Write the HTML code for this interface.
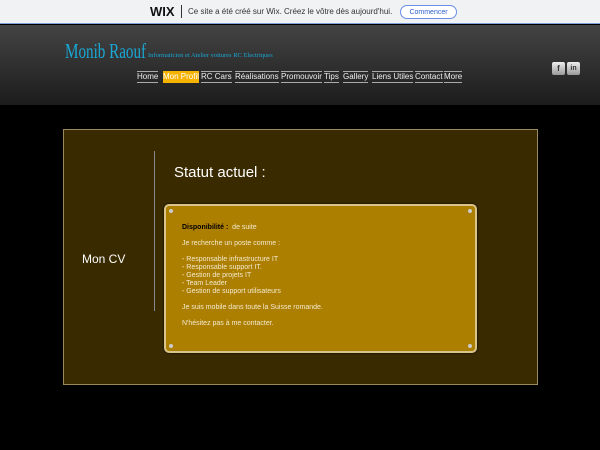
<!DOCTYPE html>
<html><head><meta charset="utf-8"><style>
*{margin:0;padding:0;box-sizing:border-box}
body{width:600px;height:450px;background:#000;font-family:"Liberation Sans",sans-serif;position:relative;overflow:hidden}
.wix{position:absolute;left:0;top:0;width:600px;height:24px;background:#f1f2f4;border-bottom:1px solid #7f9fdc}
.hdr{position:absolute;left:0;top:25px;width:600px;height:80px;background:linear-gradient(#444,#1c1c1c)}
.nav a{position:absolute;top:71px;height:12px;font-size:8px;color:#eee;border-top:1px solid #aaa;border-bottom:1px solid #aaa;line-height:10px;white-space:nowrap}
.box{position:absolute;left:63px;top:129px;width:475px;height:256px;background:#3a2a00;border:1px solid #9a8a60}
.card{position:absolute;left:164px;top:204px;width:313px;height:149px;background:#ad7f00;border:2px solid #d9c48a;border-radius:5px;box-shadow:0 0 2px #000}
.card p{position:absolute;left:16px;font-size:7px;color:#f3ead0;line-height:8px}
.dot{position:absolute;width:4px;height:4px;border-radius:50%;background:#ccc}
.sq{position:absolute;top:62px;width:13px;height:13px;background:linear-gradient(#eee,#999);border-radius:2px;font-size:8px;color:#333;text-align:center;line-height:13px;font-weight:bold}
</style></head><body>
<div class="wix">
<span style="position:absolute;left:150px;top:4px;font-weight:bold;font-size:13px;color:#111">WIX</span>
<span style="position:absolute;left:181px;top:5px;width:1px;height:13px;background:#333"></span>
<span style="position:absolute;left:188px;top:7px;font-size:8px;color:#333">Ce site a été créé sur Wix. Créez le vôtre dès aujourd'hui.</span>
<span style="position:absolute;left:400px;top:5px;width:57px;height:14px;border:1px solid #6b8fe5;border-radius:8px;font-size:7px;color:#3060d0;text-align:center;line-height:14px;background:#fff">Commencer</span>
</div>
<div class="hdr"></div>
<div style="position:absolute;left:65px;top:39px;font-family:'Liberation Serif',serif;font-size:21px;color:#19a8d6;transform:scaleX(0.72);transform-origin:0 0;white-space:nowrap">Monib Raouf</div>
<div style="position:absolute;left:148px;top:52px;font-family:'Liberation Serif',serif;font-size:6.5px;color:#19a8d6;white-space:nowrap">Informaticien et Atelier voitures RC Electriques</div>
<div class="nav">
<a style="left:137px">Home</a>
<a style="left:163px;background:#f6b300;border-color:#f6b300;color:#fff">Mon Profil</a>
<a style="left:201px">RC Cars</a>
<a style="left:235px">Réalisations</a>
<a style="left:281px">Promouvoir</a>
<a style="left:324px">Tips</a>
<a style="left:343px">Gallery</a>
<a style="left:372px">Liens Utiles</a>
<a style="left:415px">Contact</a>
<a style="left:444px">More</a>
</div>
<div class="sq" style="left:552px">f</div>
<div class="sq" style="left:567px;font-size:7px">in</div>
<div class="box"></div>
<div style="position:absolute;left:154px;top:151px;width:1px;height:160px;background:#888"></div>
<div style="position:absolute;left:82px;top:252px;font-size:12px;color:#fff">Mon CV</div>
<div style="position:absolute;left:174px;top:164px;font-size:15px;color:#fff">Statut actuel :</div>
<div class="card">
<p style="top:18px"><b style="color:#000">Disponibilité :</b>&nbsp; de suite</p>
<p style="top:34px">Je recherche un poste comme :</p>
<p style="top:50px">- Responsable infrastructure IT<br>- Responsable support IT.<br>- Gestion de projets IT<br>- Team Leader<br>- Gestion de support utilisateurs</p>
<p style="top:98px">Je suis mobile dans toute la Suisse romande.</p>
<p style="top:114px">N'hésitez pas à me contacter.</p>
<div class="dot" style="left:3px;top:3px"></div><div class="dot" style="right:3px;top:3px"></div>
<div class="dot" style="left:3px;bottom:3px"></div><div class="dot" style="right:3px;bottom:3px"></div>
</div>
</body></html>
